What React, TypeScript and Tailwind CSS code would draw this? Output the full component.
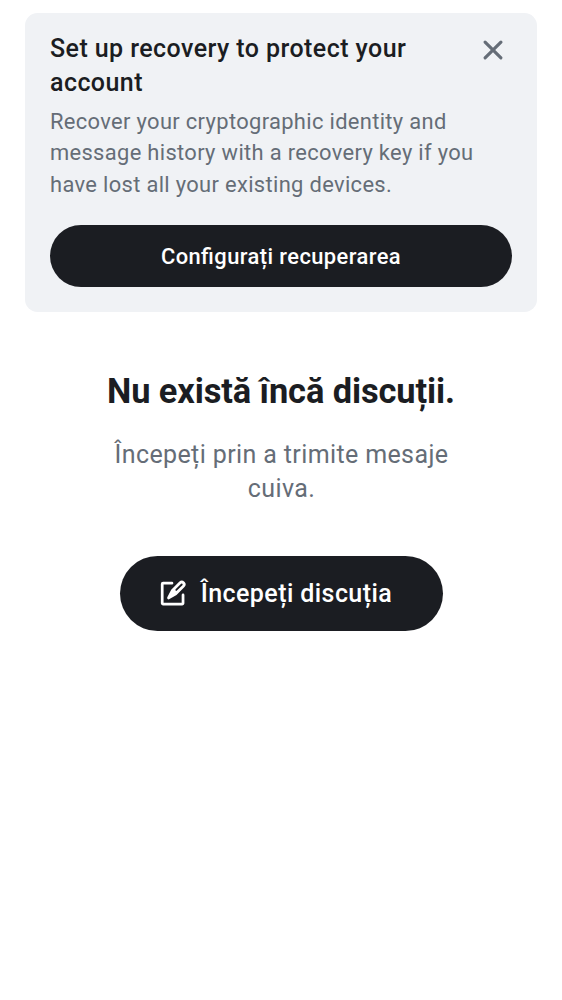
import React from "react";

function CloseIcon() {
  return (
    <svg width="38" height="38" viewBox="0 0 24 24" fill="#656D77" aria-hidden="true">
      <path d="M6.293 6.293a1 1 0 0 1 1.414 0L12 10.586l4.293-4.293a1 1 0 1 1 1.414 1.414L13.414 12l4.293 4.293a1 1 0 0 1-1.414 1.414L12 13.414l-4.293 4.293a1 1 0 0 1-1.414-1.414L10.586 12 6.293 7.707a1 1 0 0 1 0-1.414Z" />
    </svg>
  );
}

function ComposeIcon() {
  return (
    <svg className="shrink-0" width="31.25" height="31.25" viewBox="0 0 24 24" fill="none" aria-hidden="true">
      <path d="M11.5 4H4.7a.7.7 0 0 0-.7.7v14.6a.7.7 0 0 0 .7.7h14.6a.7.7 0 0 0 .7-.7V13" stroke="currentColor" strokeWidth="2.1" strokeLinecap="round" />
      <path d="M17 2.9a2.9 2.9 0 0 1 4.1 4.1L15 13.1l-5.4 3.1a1.15 1.15 0 0 1-1.6-1.6L10.9 9Z" fill="currentColor" />
      <path d="m14.8 9.2 4.2-4.2" stroke="#1B1D22" strokeWidth="1.4" strokeLinecap="round" />
    </svg>
  );
}

export default function App() {
  return (
    <main className="min-h-screen overflow-hidden bg-white px-[25px] pt-[12.5px] font-[Roboto,sans-serif] text-[#1B1D22]">
      <section className="h-[299.7px] rounded-[12.5px] bg-[#F0F2F5] px-[25px] pt-[18.5px]">
        <div className="flex justify-between">
          <h2 className="w-[380px] pt-[1px] text-[25px] leading-[34.4px] font-medium tracking-[0.43px]">Set up recovery to protect your account</h2>
          <button aria-label="Close" className="h-[38px] w-[38px]"><CloseIcon /></button>
        </div>
        <p className="mt-[5.4px] text-[21.9px] leading-[31.25px] tracking-[0.34px] text-[#656D77]">
          Recover your cryptographic identity and<br />message history with a recovery key if you<br />have lost all your existing devices.
        </p>
        <button className="mt-[24.7px] h-[62.5px] w-full rounded-full bg-[#1B1D22] pt-[3px] text-[21.9px] font-medium tracking-[0.42px] text-white [font-feature-settings:'liga'_1]">Configurați recuperarea</button>
      </section>
      <section className="flex flex-col items-center text-center">
        <h1 className="mt-[56.8px] text-[34.4px] leading-[44px] font-bold tracking-[-0.09px]">Nu există încă discuții.</h1>
        <p className="mt-[25px] w-[350px] pl-[1px] text-[25px] leading-[34.4px] tracking-[0.38px] text-[#656D77]">Începeți prin a trimite mesaje cuiva.</p>
        <button className="mt-[49px] flex h-[75px] w-[323px] items-center gap-[12.75px] rounded-full bg-[#1B1D22] pl-[37.25px] text-[25px] font-medium tracking-[0.42px] text-white"><ComposeIcon /><span>Începeți discuția</span></button>
      </section>
    </main>
  );
}
